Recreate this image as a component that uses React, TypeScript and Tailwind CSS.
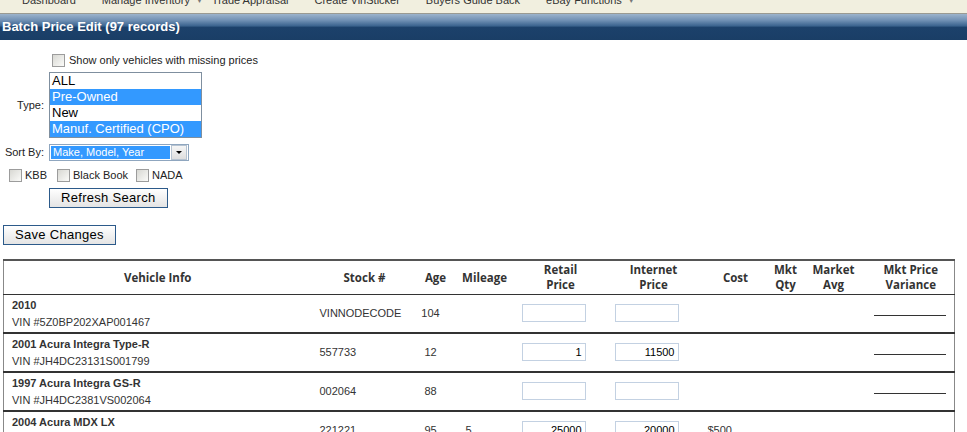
import React from "react";

const navItems = [
  { label: "Dashboard", arrow: false },
  { label: "Manage Inventory", arrow: true },
  { label: "Trade Appraisal", arrow: false },
  { label: "Create VinSticker", arrow: false },
  { label: "Buyers Guide Back", arrow: false },
  { label: "eBay Functions", arrow: true },
];

const typeOptions = [
  { label: "ALL", selected: false },
  { label: "Pre-Owned", selected: true },
  { label: "New", selected: false },
  { label: "Manuf. Certified (CPO)", selected: true },
];

const vehicles = [
  { title: "2010", vin: "VIN #5Z0BP202XAP001467", stock: "VINNODECODE", age: "104", mileage: "", retail: "", internet: "", cost: "" },
  { title: "2001 Acura Integra Type-R", vin: "VIN #JH4DC23131S001799", stock: "557733", age: "12", mileage: "", retail: "1", internet: "11500", cost: "" },
  { title: "1997 Acura Integra GS-R", vin: "VIN #JH4DC2381VS002064", stock: "002064", age: "88", mileage: "", retail: "", internet: "", cost: "" },
  { title: "2004 Acura MDX LX", vin: "VIN #2HNYD18624H521467", stock: "221221", age: "95", mileage: "5", retail: "25000", internet: "20000", cost: "$500" },
];

// old style windows checkbox
const Check = () => (
  <span className="inline-block w-[13px] h-[13px] shrink-0 border border-[#9c9c9c] bg-gradient-to-br from-[#d8d8d3] to-[#fbfbf9]" />
);

const OldButton = ({ children }: { children: React.ReactNode }) => (
  <button className="h-[20px] px-[11px] border border-[#2c5a8a] bg-gradient-to-b from-[#ffffff] to-[#e4e4e4] text-[13px] leading-[18px] tracking-[0.3px] text-black">
    {children}
  </button>
);

const PriceBox = ({ value }: { value: string }) => (
  <div className="w-[64px] h-[18px] border border-[#c3d1e2] bg-white text-right pr-[3px] text-[11px] leading-[16px] text-black">
    {value}
  </div>
);

export default function App() {
  return (
    <div className="w-[967px] h-[432px] overflow-hidden bg-white font-['Liberation_Sans',Arial,sans-serif] text-[#222]">
      {/* top menu, scrolled so only lower part shows */}
      <div className="h-[14px] overflow-hidden bg-[#f1efdf] border-b border-[#9a9a92]">
        <div className="flex items-center pl-[22px] mt-[-6px] text-[11px] leading-[13px] text-[#333]">
          {navItems.map((n) => (
            <div key={n.label} className={n.arrow ? "flex items-center mr-[9px]" : "flex items-center mr-[26px]"}>
              <span>{n.label}</span>
              {n.arrow && <span className="ml-[6px] text-[7px] text-[#777]">▼</span>}
            </div>
          ))}
        </div>
      </div>

      {/* title bar */}
      <div className="h-[26px] bg-[linear-gradient(to_bottom,#9cb3cc_0%,#6f8fb3_25%,#3d6590_45%,#1c416b_52%,#1a3e66_100%)] flex items-center pl-[2px]">
        <span className="text-white font-bold text-[13px] leading-[16px]">Batch Price Edit (97 records)</span>
      </div>

      {/* filter form */}
      <div className="text-[11px] text-[#222]">
        <div className="flex items-center gap-[4px] pl-[52px] mt-[14px] h-[12px]">
          <Check />
          <span>Show only vehicles with missing prices</span>
        </div>

        <div className="flex items-center mt-[6px]">
          <span className="w-[49px] pr-[5px] text-right">Type:</span>
          <div className="w-[153px] border border-[#7f8f9f] bg-white text-[13px] leading-[16px] text-black">
            {typeOptions.map((o) => (
              <div
                key={o.label}
                className={o.selected ? "h-[16px] pl-[2px] bg-[#3399ff] text-white" : "h-[16px] pl-[2px]"}
              >
                {o.label}
              </div>
            ))}
          </div>
        </div>

        <div className="flex items-center mt-[6px]">
          <span className="w-[49px] pr-[5px] text-right">Sort By:</span>
          <div className="w-[140px] h-[17px] border border-[#8fa6bf] bg-white flex items-center p-[1px]">
            <div className="flex-1 h-[13px] bg-[#3399ff] text-white text-[11px] leading-[13px] pl-[2px]">
              Make, Model, Year
            </div>
            <div className="w-[16px] h-[15px] ml-[1px] border border-[#b6c3d1] bg-gradient-to-b from-[#f6f6f6] to-[#dedede] flex items-center justify-center">
              <span className="block w-0 h-0 border-l-[3px] border-r-[3px] border-t-[3px] border-l-transparent border-r-transparent border-t-black" />
            </div>
          </div>
        </div>

        <div className="flex items-center mt-[8px] pl-[9px] h-[13px]">
          <Check />
          <span className="ml-[3px]">KBB</span>
          <span className="ml-[10px]" />
          <Check />
          <span className="ml-[3px]">Black Book</span>
          <span className="ml-[8px]" />
          <Check />
          <span className="ml-[3px]">NADA</span>
        </div>

        <div className="pl-[49px] mt-[6px]">
          <OldButton>Refresh Search</OldButton>
        </div>

        <div className="pl-[3px] mt-[17px]">
          <OldButton>Save Changes</OldButton>
        </div>
      </div>

      {/* results grid */}
      <table className="ml-[3px] mt-[14px] w-[951px] table-fixed border-collapse border-t-2 border-t-[#555] border-x border-x-[#888] text-[11px]">
        <colgroup>
          <col className="w-[308px]" />
          <col className="w-[100px]" />
          <col className="w-[38px]" />
          <col className="w-[64px]" />
          <col className="w-[94px]" />
          <col className="w-[92px]" />
          <col className="w-[72px]" />
          <col className="w-[28px]" />
          <col className="w-[68px]" />
          <col className="w-[87px]" />
        </colgroup>
        <thead>
          <tr className="h-[34px] border-b border-[#333] font-['Open_Sans',sans-serif] text-[11.5px] leading-[15px] font-bold text-[#333]">
            <th className="font-bold">Vehicle Info</th>
            <th className="font-bold pl-[6px]">Stock #</th>
            <th className="font-bold pl-[10px]">Age</th>
            <th className="font-bold pl-[6px]">Mileage</th>
            <th className="font-bold">Retail<br />Price</th>
            <th className="font-bold">Internet<br />Price</th>
            <th className="font-bold">Cost</th>
            <th className="font-bold">Mkt<br />Qty</th>
            <th className="font-bold">Market<br />Avg</th>
            <th className="font-bold">Mkt Price<br />Variance</th>
          </tr>
        </thead>
        <tbody>
          {vehicles.map((v) => (
            <tr key={v.vin} className="border-b-2 border-[#333] text-[#333]">
              <td className="pl-[8px] pt-[2px] pb-[1px] leading-[17px] align-middle">
                <div className="font-bold">{v.title}</div>
                <div>{v.vin}</div>
              </td>
              <td className="pl-[8px] align-middle">{v.stock}</td>
              <td className="text-center align-middle">{v.age}</td>
              <td className="pl-[16px] align-middle">{v.mileage}</td>
              <td className="pl-[8px] align-middle">
                <PriceBox value={v.retail} />
              </td>
              <td className="pl-[7px] align-middle">
                <PriceBox value={v.internet} />
              </td>
              <td className="pl-[8px] align-middle">{v.cost}</td>
              <td />
              <td />
              <td className="pl-[6px] align-middle">
                <div className="w-[72px] border-b border-[#333] mt-[5px]" />
              </td>
            </tr>
          ))}
        </tbody>
      </table>
    </div>
  );
}
